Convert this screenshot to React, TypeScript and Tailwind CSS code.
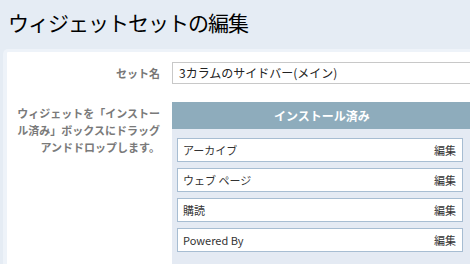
import React from 'react';

const widgets = ['アーカイブ', 'ウェブ ページ', '購読', 'Powered By'];

const App = () => {
  return (
    <div
      className="w-[470px] h-[264px] overflow-hidden bg-[#e5ecf4]"
      style={{ fontFamily: '"Noto Sans CJK JP", "Noto Sans", sans-serif' }}
    >
      <h1 className="pl-[8px] pt-[7px] h-[49px] text-[21px] leading-[30px] tracking-[-1px] font-normal text-black">
        ウィジェットセットの編集
      </h1>

      <div className="ml-[3px] w-[520px] h-[260px] bg-white border-l-4 border-t-[3px] border-[#eef3f9] rounded-tl-[5px]">
        <div className="grid grid-cols-[153px_1fr] gap-x-[12px] pt-[10px]">
          <div className="flex items-center justify-end h-[22px] text-[11px] font-bold text-[#777]">
            セット名
          </div>
          <div className="w-[320px] h-[22px] border border-[#c8c8c8] flex items-center pl-[6px] text-[12px] text-[#222]">
            3カラムのサイドバー(メイン)
          </div>

          <p className="mt-[21px] text-right text-[11px] leading-[17px] font-bold text-[#7a7a7a]">
            ウィジェットを「インストー
            <br />
            ル済み」ボックスにドラッグ
            <br />
            アンドドロップします。
          </p>
          <div className="mt-[18px] w-[300px] bg-[#e4eaf3]">
            <div className="h-[27px] bg-[#8eacbc] flex items-center justify-center text-[12px] font-bold text-white">
              インストール済み
            </div>
            <div className="flex flex-col gap-[6px] pt-[9px] pl-[5px] pr-[9px] pb-[12px]">
              {widgets.map((w) => (
                <div
                  key={w}
                  className="h-[24px] bg-white border border-[#a7bdd2] flex items-center justify-between pl-[5px] pr-[6px] text-[11px] text-[#333]"
                >
                  <span>{w}</span>
                  <span>編集</span>
                </div>
              ))}
            </div>
          </div>
        </div>
      </div>
    </div>
  );
};

export default App;
